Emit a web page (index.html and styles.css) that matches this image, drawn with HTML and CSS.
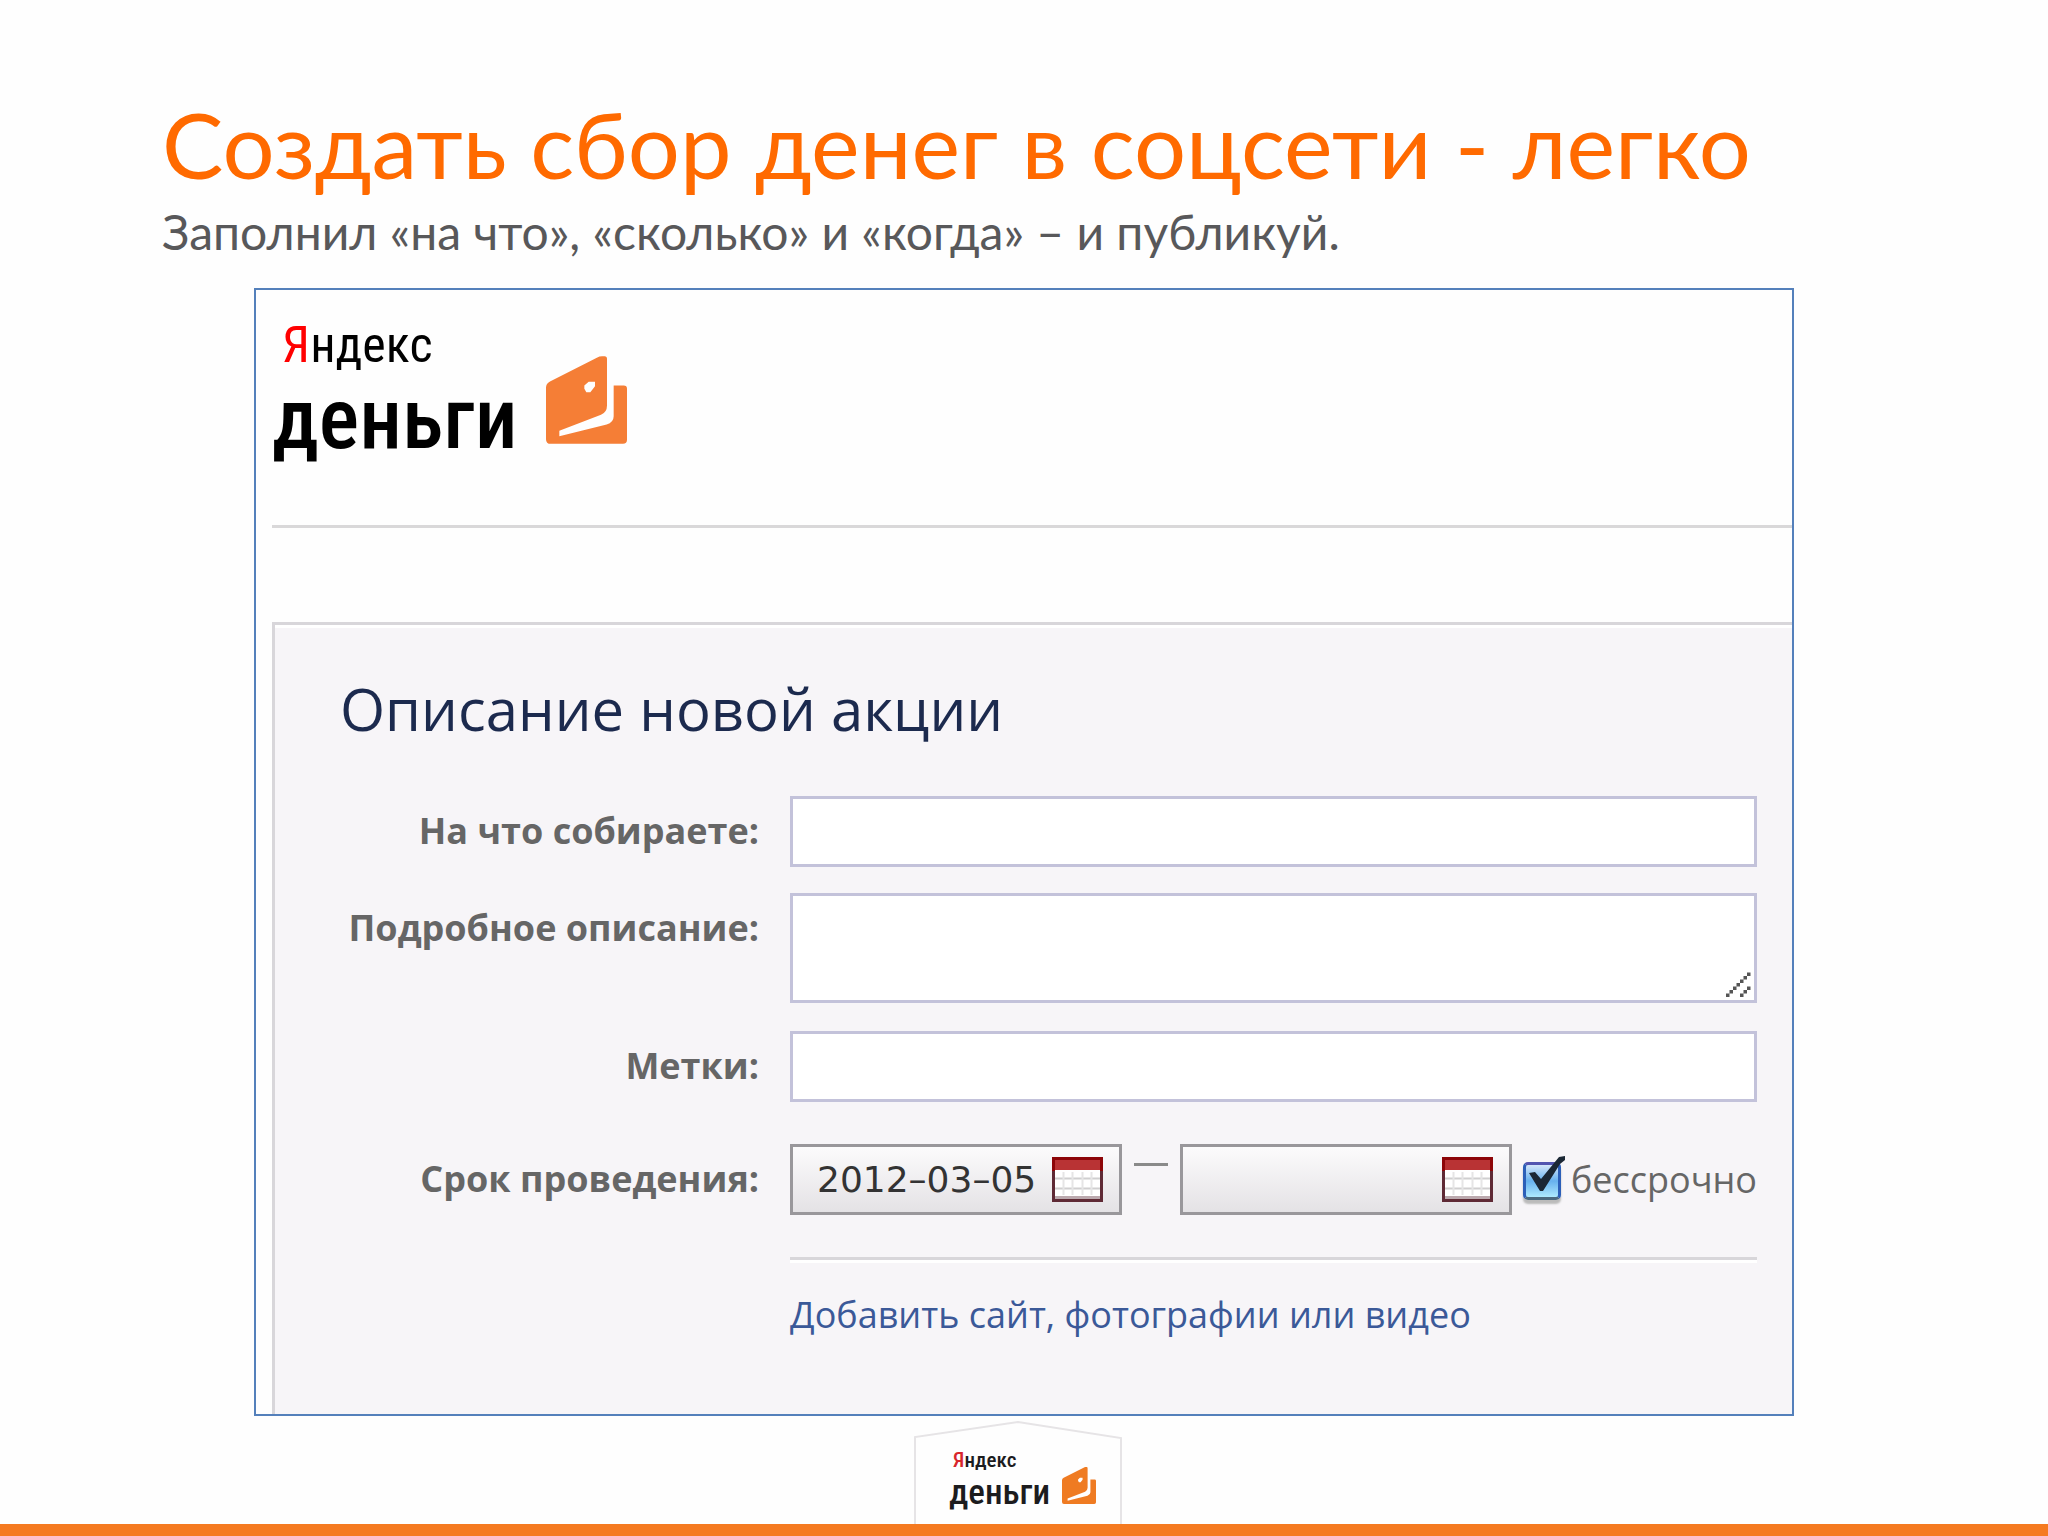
FILE: index.html
```
<!DOCTYPE html>
<html lang="ru">
<head>
<meta charset="utf-8">
<meta name="viewport" content="width=device-width, initial-scale=1">
<title>Создать сбор денег в соцсети - легко</title>
<link rel="stylesheet" href="styles.css">
</head>
<body>
<svg class="sprite" aria-hidden="true">
  <symbol id="wallet" viewBox="0 0 243 263">
    <path fill-rule="evenodd" d="M0 94Q0 82 12 76L154 4Q160 0 168 0H176Q183 0 183 8V148Q183 168 165 176L40 224V240L182 205Q203 198 203 180V88H233Q243 88 243 98V251Q243 263 231 263H14Q0 263 0 249ZM115 88L128 77H147V90L133 108H121L115 98Z"/>
  </symbol>
  <symbol id="calendar" viewBox="0 0 51 45">
    <rect width="51" height="45" fill="#5f2a35"/>
    <rect width="51" height="14" fill="#8d0508"/>
    <rect x="3" y="3" width="45" height="10" fill="#b93334"/>
    <rect x="3" y="13" width="45" height="26" fill="#fff"/>
    <rect x="3" y="39" width="45" height="3" fill="#bba9ae"/>
    <path d="M3 21.500H48M3 31.500H48" stroke="#d0cfd0" stroke-width="2"/>
    <path d="M11.500 15V38M20.500 15V38M30.500 15V38M39.500 15V38" stroke="#e6e5e6" stroke-width="2"/>
  </symbol>
</svg>
<main class="slide">
  <header class="intro">
    <h1 class="title">Создать сбор денег в соцсети - легко</h1>
    <p class="subtitle">Заполнил «на что», «сколько» и «когда» – и публикуй.</p>
  </header>

  <section class="frame">
    <div class="logo">
      <div class="logo-text">
        <span class="logo-brand"><span class="logo-initial">Я</span>ндекс</span>
        <span class="logo-name">деньги</span>
      </div>
      <svg class="logo-wallet" aria-hidden="true"><use href="#wallet"/></svg>
    </div>
    <hr class="divider">
    <form class="panel">
      <h2 class="panel-title">Описание новой акции</h2>
      <div class="fields">
        <label class="label" for="goal">На что собираете:</label>
        <input class="control" id="goal" type="text">

        <label class="label" for="details">Подробное описание:</label>
        <div class="area">
          <textarea class="control control-area" id="details"></textarea>
          <svg class="grip" viewBox="0 0 8 8" aria-hidden="true">
            <path d="M0 7h1v1H0zM1 6h1v1H1zM2 5h1v1H2zM3 4h1v1H3zM4 3h1v1H4zM5 2h1v1H5zM6 1h1v1H6zM4 7h1v1H4zM5 6h1v1H5zM6 5h1v1H6z"/>
          </svg>
        </div>

        <label class="label" for="tags">Метки:</label>
        <input class="control control-tags" id="tags" type="text">

        <label class="label" for="from">Срок проведения:</label>
        <div class="dates">
          <div class="date">
            <input class="date-input" id="from" type="text" value="2012–03–05">
            <button class="date-button" type="button" aria-label="Дата начала"><svg class="calendar" aria-hidden="true"><use href="#calendar"/></svg></button>
          </div>
          <span class="dash"></span>
          <div class="date">
            <input class="date-input" type="text" aria-label="Дата окончания">
            <button class="date-button" type="button" aria-label="Выбрать дату окончания"><svg class="calendar" aria-hidden="true"><use href="#calendar"/></svg></button>
          </div>
          <label class="forever">
            <span class="tick">
              <input class="tick-box" type="checkbox" checked>
              <svg class="tick-mark" viewBox="0 0 42 46" aria-hidden="true"><path d="M6 18L12 17L18 24L36 2L42 1V5L37 9L20 36H17Z"/></svg>
            </span>
            <span>бессрочно</span>
          </label>
        </div>

        <div class="more"><a class="more-link" href="#">Добавить сайт, фотографии или видео</a></div>
      </div>
    </form>
  </section>

  <footer class="footer">
    <div class="house">
      <svg class="house-outline" viewBox="0 0 208 103" preserveAspectRatio="none" aria-hidden="true"><path d="M1 103V16L104 1L207 17V103"/></svg>
      <div class="logo logo-small">
        <div class="logo-text">
          <span class="logo-brand"><span class="logo-initial">Я</span>ндекс</span>
          <span class="logo-name">деньги</span>
        </div>
        <svg class="logo-wallet" aria-hidden="true"><use href="#wallet"/></svg>
      </div>
    </div>
  </footer>
</main>
</body>
</html>
```
FILE: styles.css
```
* { box-sizing: border-box; }

body {
  margin: 0;
  background: #fefefe;
  font-family: "Open Sans", "Noto Sans", sans-serif;
  font-size: 36px;
  color: #666;
}

.sprite { display: none; }

.slide {
  display: flex;
  flex-direction: column;
  min-height: 100vh;
}

.intro {
  padding: 88px 162px 0;
  font-family: Lato, "Open Sans", sans-serif;
}

.title {
  margin: 0;
  font-size: 92px;
  line-height: 112px;
  font-weight: 400;
  color: #ff6a00;
}

.subtitle {
  margin: 0;
  font-size: 48px;
  line-height: 64px;
  color: #58585a;
}

.frame {
  width: calc(100% - 508px);
  margin: 24px auto 0;
  padding: 24px 0 0 16px;
  border: 2px solid #5480bb;
}

/* Logo */
.logo {
  display: flex;
  align-items: flex-end;
  gap: 28px;
  font-family: "Roboto Condensed", Roboto, sans-serif;
  color: #000;
}

.logo-text {
  display: flex;
  flex-direction: column;
}

.logo-brand { padding-left: 10px; font-size: 50px; line-height: 62px; }
.logo-initial { color: #f00; }
.logo-name { font-size: 85px; line-height: 86px; font-weight: 500; }
.logo-wallet { width: 81px; height: 88px; margin-bottom: 18px; fill: #f57e36; }

.divider {
  height: 3px;
  margin: 63px 0 94px;
  border: 0;
  background: #d9d8d9;
}

/* Form */
.panel {
  padding: 42px 35px 76px 65px;
  border-top: 3px solid #d8d6da;
  border-left: 3px solid #d8d6da;
  background: #f7f5f8;
  box-shadow: inset 0 3px #fff;
}

.panel-title {
  margin: 0;
  font-size: 58px;
  line-height: 84px;
  font-weight: 500;
  color: #1c2a4e;
}

.fields {
  display: grid;
  grid-template-columns: 419px minmax(0, 1fr);
  column-gap: 31px;
  margin-top: 45px;
}

.label {
  padding-top: 12px;
  line-height: 46px;
  font-weight: 700;
  text-align: right;
}

.control {
  display: block;
  width: 100%;
  height: 71px;
  margin-bottom: 26px;
  padding: 0 16px;
  border: 3px solid #c3c2da;
  border-radius: 0;
  background: #fff;
  font: inherit;
}

.area { position: relative; }
.control-area { height: 110px; margin-bottom: 28px; resize: none; }

.grip {
  position: absolute;
  right: 3px;
  top: 76px;
  width: 28px;
  height: 28px;
  fill: #555;
}

.control-tags { margin-bottom: 42px; }

.dates {
  display: flex;
  align-items: center;
  height: 71px;
}

.date {
  display: flex;
  align-items: center;
  flex: 0 0 332px;
  min-width: 0;
  height: 71px;
  padding: 0 16px 0 24px;
  border: 3px solid #99979b;
  background: linear-gradient(#fcfbfc, #e4e2e5);
}

.date-input {
  flex: 1;
  min-width: 0;
  padding: 0;
  border: 0;
  background: none;
  font: 36px "DejaVu Sans", sans-serif;
  color: #333;
}

.date-button {
  padding: 0;
  border: 0;
  background: none;
}

.calendar {
  display: block;
  width: 51px;
  height: 45px;
}

.dash {
  width: 34px;
  height: 3px;
  margin: 0 12px 31px;
  background: #8a8a8a;
}

.forever {
  display: flex;
  align-items: center;
  justify-content: space-between;
  flex: 1;
  padding-left: 11px;
  white-space: nowrap;
}

.tick { position: relative; }

.tick-box {
  display: block;
  width: 38px;
  height: 38px;
  margin: 2px 0 0;
  appearance: none;
  border: 3px solid #2c5fb8;
  border-top-color: #5355b0;
  border-bottom-color: #4c6a80;
  border-radius: 5px;
  background: linear-gradient(#d4e6fa, #67b1ee 50%, #aeeaff);
  box-shadow: 0 4px 2px #bbb;
}

.tick-mark {
  position: absolute;
  left: 0;
  top: -5px;
  width: 42px;
  height: 46px;
  fill: #1b2735;
}

.more {
  grid-column: 2;
  margin-top: 42px;
  padding-top: 32px;
  border-top: 3px solid #d8d6da;
  box-shadow: inset 0 3px #fff;
  line-height: 46px;
}

.more-link {
  color: #3b5998;
  font-weight: 500;
  text-decoration: none;
}

/* Footer */
.footer {
  display: flex;
  justify-content: center;
  margin-top: auto;
  padding-right: 12px;
  border-bottom: 12px solid #f57a20;
}

.house {
  position: relative;
  width: 208px;
  padding: 26px 0 11px 35px;
}

.house-outline {
  position: absolute;
  inset: 0;
  width: 100%;
  height: 100%;
  fill: none;
  stroke: #e6e4e6;
  stroke-width: 2;
}

.logo-small { position: relative; gap: 12px; color: #1c1c1e; }
.logo-small .logo-brand { padding-left: 4px; font-size: 21px; line-height: 26px; font-weight: 500; }
.logo-small .logo-initial { color: #d8262c; }
.logo-small .logo-name { font-size: 35px; line-height: 40px; }
.logo-small .logo-wallet { width: 34px; height: 39px; margin-bottom: 8px; fill: #ef7b22; }
```
